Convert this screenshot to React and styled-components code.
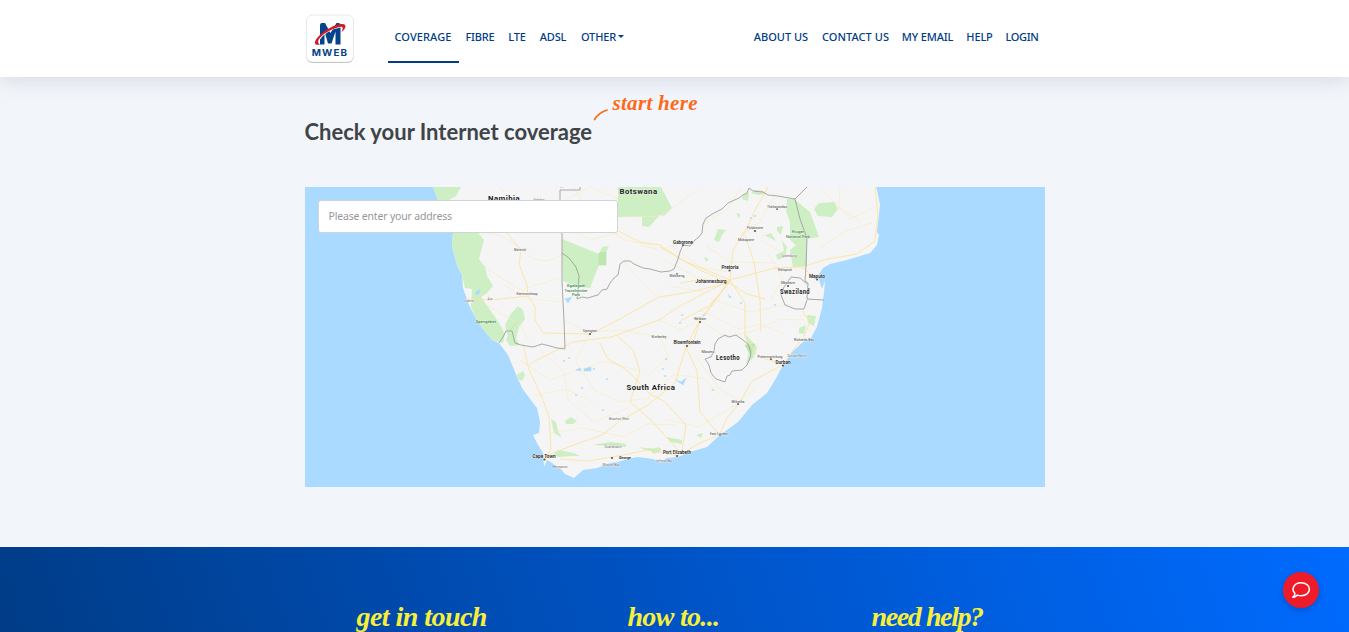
import React from 'react';
import styled, { createGlobalStyle } from 'styled-components';

const GlobalStyle = createGlobalStyle`
  * { box-sizing: border-box; }
  body { margin: 0; background: #f2f5fa; font-family: "Noto Sans", sans-serif; overflow: hidden; }
`;
const Page = styled.div`height: 632px; overflow: hidden; display: flex; flex-direction: column;`;
const Header = styled.header`
  height: 77px; flex: none; background: #fff; box-shadow: 0 2px 20px rgba(50, 65, 80, .16);
  display: flex; justify-content: center; position: relative;
`;
const Bar = styled.div`width: 740px; display: flex; align-items: flex-start;`;
const Logo = styled.svg`width: 52px; height: 54px; margin: 12px 31px 0 0; display: block; flex: none;`;
const Nav = styled.nav`display: flex; padding-top: 12px; margin-left: ${p => (p.$end ? 'auto' : 0)};`;
const NavLink = styled.a`
  height: 51px; width: ${p => p.$w}px; flex: none; display: flex; align-items: center; justify-content: center;
  color: #003c87; font-size: 11px; font-weight: 500; white-space: nowrap; letter-spacing: ${p => p.$ls ?? -0.15}px;
  border-bottom: 2px solid ${p => (p.$active ? '#003c87' : 'transparent')};
`;
const Caret = styled.span`
  margin-left: 2px; border: 3px solid transparent; border-top-color: #003c87; border-bottom: 0;
`;
const Main = styled.main`width: 740px; margin: 0 auto; flex: none; height: 470px;`;
const TitleRow = styled.div`height: 110px; display: flex; align-items: flex-start;`;
const Title = styled.h1`
  margin: 40px 0 0; width: 288px; font-family: Lato, sans-serif; font-size: 22px; line-height: 30px; font-weight: 700; color: #404447;
  letter-spacing: 0; white-space: nowrap;
`;
const Swoosh = styled.svg`width: 16px; height: 13px; margin-top: 31px; flex: none;`;
const Script = styled.span`
  margin: 0; font-family: "Liberation Serif", serif; font-style: italic; font-weight: 700; white-space: nowrap;
  font-size: ${p => p.$size}px; line-height: 30px; color: ${p => p.$color}; letter-spacing: ${p => p.$ls}px;
  display: block;
`;
const Start = styled.div`margin: 11px 0 0 4px;`;
const MapBox = styled.div`height: 300px; background: #aadaff; position: relative;`;
const MapArt = styled.svg`display: block; width: 740px; height: 300px;`;
const Address = styled.input`
  position: absolute; left: 13px; top: 13px; width: 300px; height: 33px; border: 1px solid #ced4da;
  border-radius: 3px; background: #fff; padding: 0 10px 2px; font: 10.5px "Noto Sans", sans-serif; letter-spacing: -0.18px;
  &::placeholder { color: #96989a; opacity: 1; }
`;
const Footer = styled.footer`
  height: 85px; flex: none; background: linear-gradient(72deg, #003c87 0%, #0050bd 43%, #006bff 100%);
  display: flex; justify-content: center; padding-top: 55px;
`;
const Columns = styled.div`width: 740px; display: grid; grid-template-columns: 271px 244px 173px; padding-left: 52px;`;
const Chat = styled.button`
  position: absolute; left: 1283px; top: 572px; width: 36px; height: 36px; padding: 0; border: 0; border-radius: 50%;
  background: #ee1c2b; box-shadow: 0 2px 6px rgba(0, 30, 90, .3); display: grid; place-items: center;
`;

const coast = 'M433 187L438 200 445 218 453 233 452 247 457 265 462 275 463 288 469 305 475 317 482 328 492 340 499 343 508 355 515 372 522 388 530 399 537 408 540 422 539 433 533 435 537 443 543 453 544 467 547 460 552 463 560 468 565 474 574 478 583 470 597 468 610 463 618 462 627 459 638 457 653 459 660 462 667 458 678 457 690 452 707 447 720 435 738 422 752 405 767 393 775 380 783 365 792 352 803 342 811 338 817 327 822 308 824 292 825 282 820 281 817 277 823 268 830 264 847 260 870 253 877 245 879 235 877 232 880 205 877 190 876 187Z';

const parks = [
  'M433 187L461 187 456 196 449 200 455 233 478 233 484 240 482 247 479 259 485 267 487 276 493 286 487 293 481 297 488 307 499 323 505 334 503 343 492 340 482 328 475 317 471 307 472 289 465 288 462 275 457 265 452 247 453 233 445 218 438 200Z',
  'M562 239L599 254 602 247 609 246 606 252 606 265 599 265 590 288 579 287 563 281Z',
  'M618 187L661 187 672 208 664 216 660 215 649 227 642 226 642 217 618 217Z',
  'M787 199L794 199 810 212 819 237 807 239 807 266 793 267 790 250 796 245 790 240 790 222 786 211Z',
  'M819 203L834 202 838 209 832 217 818 216 814 209Z',
  'M505 325L510 315 518 306 523 310 525 319 519 327 516 339 508 337Z',
  'M508 335L515 337 520 345 510 346 506 340Z',
  'M745 334L757 347 754 357 746 365 749 352Z',
  'M517 375L523 371 525 375 522 381 518 379Z',
  'M565 421L571 417 577 421 573 424 566 424Z',
  'M551 419L556 422 558 431 562 438 554 433Z',
  'M592 445L610 442 626 444 626 447 605 445Z',
  'M638 447L646 448 660 449 659 452 646 450Z',
  'M649 450L659 447 662 450 654 454Z',
  'M667 437L682 440 682 444 670 442Z',
  'M696 435L703 433 701 438Z',
  'M755 190L763 191 766 194 758 195 751 193Z',
  'M743 195L749 192 748 201 742 199Z',
  'M718 229L726 230 722 235 719 242 714 240Z',
  'M761 237L771 233 776 241 770 238 764 235Z',
  'M777 227L783 226 781 235 777 231Z',
  'M782 240L787 247 785 257 778 260 776 255 784 251Z',
  'M807 315L816 316 814 326 808 323Z',
  'M799 328L806 325 804 334 799 333Z',
  'M553 455L558 450 574 453 580 456 571 456 559 457Z',
  'M704 257L709 259 706 262Z', 'M736 213L740 214 739 219Z',
];
const minorRoads = 'M478 233Q500 230 522 250T562 253M485 267L520 290 560 278M488 306L520 325 529 340M505 285L525 298 562 302M500 187L511 202 540 225M562 202L590 187 618 199M618 233L590 240 562 225M563 320L588 332 620 330 659 337M618 255L640 280 658 297M620 217L660 216 698 190M640 245L660 250 682 243M659 320L681 330 699 320M590 334L575 360 594 390 620 402 650 398M540 350L564 372 568 400 594 422 628 408M520 360L550 380 605 361 640 371M534 396L565 389 594 402M549 433L584 428 623 437 648 424 677 425M648 397L674 374 704 379 720 394M660 337L669 357 648 375M695 355L719 388 740 401 756 388M665 419L699 427 740 402M700 320L725 337 754 331 780 319 804 320M711 299L750 312 789 304M700 310L739 329 760 324 784 334M768 254L783 279 770 300M761 240L786 255M757 224L735 241M741 187L728 209 700 226M820 187L850 219 873 208M820 248L845 231 872 223M840 187L839 208 862 222M775 195L760 222 741 235M705 245L730 262 776 263M670 245L700 267 728 272M663 259L701 280M670 286L704 292M574 187L588 214 624 240 652 245';
const roads = [
  'M507 233L521 250 519 264 527 285 528 296 535 307 535 320 543 333 590 334 618 320 659 297 690 292 728 283',
  'M468 299L491 300 528 296', 'M523 344L529 370 540 393 549 416 551 448 545 460',
  'M529 364L573 342 611 337 659 320 680 306 730 280',
  'M543 457L571 446 602 435 620 421 648 405 675 383 686 347 700 320 730 280',
  'M560 459L588 461 612 457 648 450 678 456 700 443 719 435 727 418 738 405 752 381 773 370 784 364',
  'M730 280L733 250 747 228 755 210 768 187', 'M730 280L775 268 802 267 817 280',
  'M730 280L745 303 745 337 759 357 784 364', 'M730 280L716 300 700 321 693 343 686 347 697 371 700 412 719 434',
  'M745 235L754 262 760 300 761 332', 'M730 280L682 260 660 245', 'M802 267L827 259 857 254 875 241 878 215 875 187',
  'M784 364L793 350 803 338 810 322 802 311', 'M616 335L633 350 640 371 630 402 650 419 678 450',
  'M600 343L607 358 628 371 650 394 665 402 686 425 682 452', 'M618 231L640 242 660 245', 'M660 247L700 270 730 283',
  'M765 299L747 294 729 283M729 283L709 306 680 321M729 283L704 279 680 283',
];
const borders = [
  'M562 233L562 281 564 321 565 349 557 348 550 346 542 344 533 347 521 345 515 343 512 331 506 331 503 337 499 343',
  'M562 253L569 258 576 267 579 276 578 290 577 299 582 297 588 298 594 296 598 295 602 290 607 289 610 283 614 278 618 275 620 264 624 261 630 261 634 264 643 268 650 269 661 272 670 271 674 269 678 259 680 252 683 245 690 246 695 240 699 237 702 233 703 224 706 218 714 213 722 209 728 203 739 198 743 195 747 193 749 188 753 191 763 192 768 195 778 196 795 199 807 187',
  'M795 199L800 219 807 238 806 266 805 281 808 283 807 299 824 300',
  'M807 300L804 309 795 309 785 305 781 295 784 287 791 277 800 278 807 284',
  'M725 335L729 337 736 335 743 340 748 344 751 353 750 358 747 365 742 370 732 371 730 375 727 376 725 382 716 379 711 373 709 365 705 359 711 357 714 351 715 344 718 339Z',
  'M560 187L580 185 580 190 560 190 560 200',
];
const lakes = 'M475 293L480 289 479 294 477 295ZM576 370L580 368 581 371ZM584 369L591 367 591 371 584 371ZM676 380L681 382 686 378 683 385ZM819 279L825 280 822 288ZM728 294L730 298ZM565 299L572 297 568 303Z';
const ponds = [[564,361],[569,358],[576,395],[582,388],[603,410],[594,369],[607,379],[663,369],[665,376],[666,359],[682,315],[680,323],[704,315],[751,218],[755,216],[741,303],[775,305],[730,297],[713,390]];

// [text, centre x, baseline y, width, weight, size, colour]
const labels = [
  ['Namibia', 504, 201, 32, 700, 7], ['Botswana', 638.5, 194.3, 38, 700, 7], ['South Africa', 651, 390, 49, 700, 7.3],
  ['Lesotho', 728, 360, 24, 700, 6.3], ['Swaziland', 795, 293.5, 30, 700, 6.3], ['Gaborone', 683, 243.5, 20, 600, 4.8],
  ['Pretoria', 730, 269, 17, 600, 4.8], ['Johannesburg', 711, 283, 31, 600, 4.8], ['Maputo', 817, 277.5, 16, 600, 4.8],
  ['Bloemfontein', 687, 344, 27, 600, 4.8], ['Durban', 783, 363.5, 15, 600, 4.8], ['Cape Town', 544, 458, 23, 600, 4.8],
  ['Port Elizabeth', 677, 454, 28, 600, 4.8], ['Polokwane', 755, 229, 16, 500, 4], ['Mokopane', 746, 240.5, 16, 500, 4],
  ['Thohoyandou', 777, 207.5, 20, 500, 4], ['Mbabane', 788, 284, 14, 500, 4], ['Mahikeng', 677, 277, 15, 500, 4],
  ['Welkom', 700, 320, 12, 500, 4], ['Kimberley', 659, 337.5, 15, 500, 4], ['Upington', 590, 332, 14, 500, 4],
  ['Mariental', 520, 250.5, 12, 500, 4], ['Keetmanshoop', 527, 294.5, 21, 500, 4], ['Lüderitz', 469, 301.5, 10, 400, 4],
  ['Aus', 490, 300, 5, 400, 4], ['Gobabis', 539, 200.5, 11, 400, 4], ['Lydenburg', 789, 257, 15, 400, 4],
  ['Nelspruit', 785, 271, 14, 500, 4], ['Maseru', 708, 353, 13, 500, 4], ['Pietermaritzburg', 770, 357.5, 25, 500, 4],
  ['Durban North', 797, 357, 19, 400, 4], ['Richards Bay', 804, 341, 20, 500, 4], ['Mthatha', 738, 402.5, 13, 500, 4],
  ['East London', 719, 434.5, 18, 500, 4], ['Beaufort West', 619, 420, 20, 400, 4], ['Oudtshoorn', 613, 448, 17, 400, 4],
  ['George', 625, 459, 12, 600, 4], ['Mossel Bay', 611, 466, 17, 400, 4], ['Hermanus', 560, 468, 15, 400, 4],
  ['Jeffreys Bay', 664, 462, 17, 400, 4], ['Sperrgebiet', 486, 322.5, 20, 600, 4.3, '#398344'],
  ['Kgalagadi', 576, 287, 18, 500, 4.2, '#398344'], ['Transfrontier', 576, 291.5, 23, 500, 4.2, '#398344'], ['Park', 576, 296, 8, 500, 4.2, '#398344'],
  ['Kruger', 798, 233, 12, 500, 4.3, '#398344'], ['National Park', 798, 238, 24, 500, 4.3, '#398344'],
];
const dots = [[683,245],[729.5,270.5],[817,279.5],[687,346],[783,365.5],[544.5,459.5],[677,456],[788,286],[755,231],[720,435],[700,322],[590,334],[738,404],[771,359],[612,458],[777,209],[677,274]];

function CoverageMap() {
  return (
    <MapArt viewBox="305 187 740 300">
      <path d={coast} fill="#f5f5f5" />
      {parks.map(d => <path key={d} d={d} fill="#ceeec3" />)}
      <path d="M599 253L606 252 606 265 599 265ZM745 345L755 344 750 354ZM597 445l24-1M648 449l10 3M510 330l8-8" fill="#bce7af" stroke="#bce7af" strokeWidth=".7" />
      <path d={minorRoads} fill="none" stroke="#f8ebc7" strokeWidth=".7" />
      {roads.map(d => <path key={d} d={d} fill="none" stroke="#fbe3a2" strokeWidth=".9" strokeLinejoin="round" />)}
      <path d={lakes} fill="#aadaff" stroke="#aadaff" strokeWidth=".5" />
      {ponds.map(([x, y]) => <ellipse key={`${x}-${y}`} cx={x} cy={y} rx="1.3" ry=".7" fill="#aadaff" />)}
      {borders.map(d => <path key={d} d={d} fill="none" stroke="#a0a0a0" strokeWidth=".9" strokeLinejoin="round" />)}
      {dots.map(([x, y]) => <circle key={`${x}-${y}`} cx={x} cy={y} r="1.1" fill="#555" />)}
      {labels.map(([text, x, y, w, weight, size, color]) => (
        <text key={text} x={x - w / 2} y={y} textLength={w} lengthAdjust="spacingAndGlyphs" fontFamily="Roboto, sans-serif" letterSpacing={size > 6 ? 0.4 : 0}
          fontSize={size} fontWeight={weight} fill={color || (weight > 500 ? '#222' : '#666')} stroke="#fff" strokeWidth=".5" paintOrder="stroke">{text}</text>
      ))}
    </MapArt>
  );
}

function MwebLogo() {
  return (
    <Logo viewBox="305 12 52 54">
      <rect x="306.5" y="15.5" width="47" height="47.5" rx="6" fill="#b5b8ba" />
      <rect x="306.5" y="15" width="47" height="47" rx="6" fill="#fff" stroke="#e3e5e6" strokeWidth=".8" />
      <path d="M320 44.5V25Q320 23 322 23H325L330.5 33 336.5 23H338.5Q340.5 23 340.5 25V44.5H335.5V31.5L331.5 43.5H328L324.5 31.5V44.5Z" fill="#07438b" />
      <path d="M318.5 40C322 34 331 28 341 26.8" fill="none" stroke="#fff" strokeWidth="1.6" />
      <path d="M320 44.5C314 46 313.5 42 318 37C325 29 337 23.5 342.5 24C347 24 346 29 341.5 32C343.5 28 343 26 340 27C331 28.5 321 35 318.5 40C317.5 42 318.5 43.5 320 44.5Z" fill="#d31924" />
      <text x="311.7" y="56" textLength="36.5" lengthAdjust="spacingAndGlyphs" letterSpacing="1" fontFamily="Inter, sans-serif" fontWeight="700" fontSize="9" fill="#07438b">MWEB</text>
    </Logo>
  );
}

export default function App() {
  return (
    <Page>
      <GlobalStyle />
      <Header>
        <Bar>
          <MwebLogo />
          <Nav>
            <NavLink $w={71} $ls={0.1} $active>COVERAGE</NavLink>
            <NavLink $w={43}>FIBRE</NavLink>
            <NavLink $w={31}>LTE</NavLink>
            <NavLink $w={41}>ADSL</NavLink>
            <NavLink $w={58}>OTHER<Caret /></NavLink>
          </Nav>
          <Nav $end>
            <NavLink $w={69} $ls={0}>ABOUT US</NavLink>
            <NavLink $w={80} $ls={0.05}>CONTACT US</NavLink>
            <NavLink $w={64}>MY EMAIL</NavLink>
            <NavLink $w={40}>HELP</NavLink>
            <NavLink $w={45} $ls={-0.3}>LOGIN</NavLink>
          </Nav>
        </Bar>
      </Header>
      <Main>
        <TitleRow>
          <Title>Check your Internet coverage</Title>
          <Swoosh viewBox="0 0 16 13"><path d="M1.5 11.5C4 7 8 4 14 2" fill="none" stroke="#fb6a1b" strokeWidth="1.7" strokeLinecap="round" /></Swoosh>
          <Start><Script $size={21} $color="#fb6a1b" $ls={0.3}>start here</Script></Start>
        </TitleRow>
        <MapBox>
          <CoverageMap />
          <Address placeholder="Please enter your address" />
        </MapBox>
      </Main>
      <Footer>
        <Columns>
          <Script as="h2" $size={28} $color="#f7ef3b" $ls={-0.55}>get in touch</Script>
          <Script as="h2" $size={28} $color="#f7ef3b" $ls={-0.7}>how to...</Script>
          <Script as="h2" $size={28} $color="#f7ef3b" $ls={-1.4}>need help?</Script>
        </Columns>
      </Footer>
      <Chat aria-label="Chat">
        <svg width="20" height="20" viewBox="0 0 20 20" fill="none" stroke="#fff" strokeWidth="1.5" strokeLinejoin="round">
          <path d="M4 13.5C-.5 9 3.5 2.8 10 2.8C15 2.8 18.4 5.6 18.4 9.3C18.4 13 15 15.8 10 15.8C8.5 15.8 7.5 15.6 6.4 15.1C5 16.4 3.5 17.1 1.8 17.2C3.2 16 3.8 15 4 13.5Z" />
        </svg>
      </Chat>
    </Page>
  );
}
